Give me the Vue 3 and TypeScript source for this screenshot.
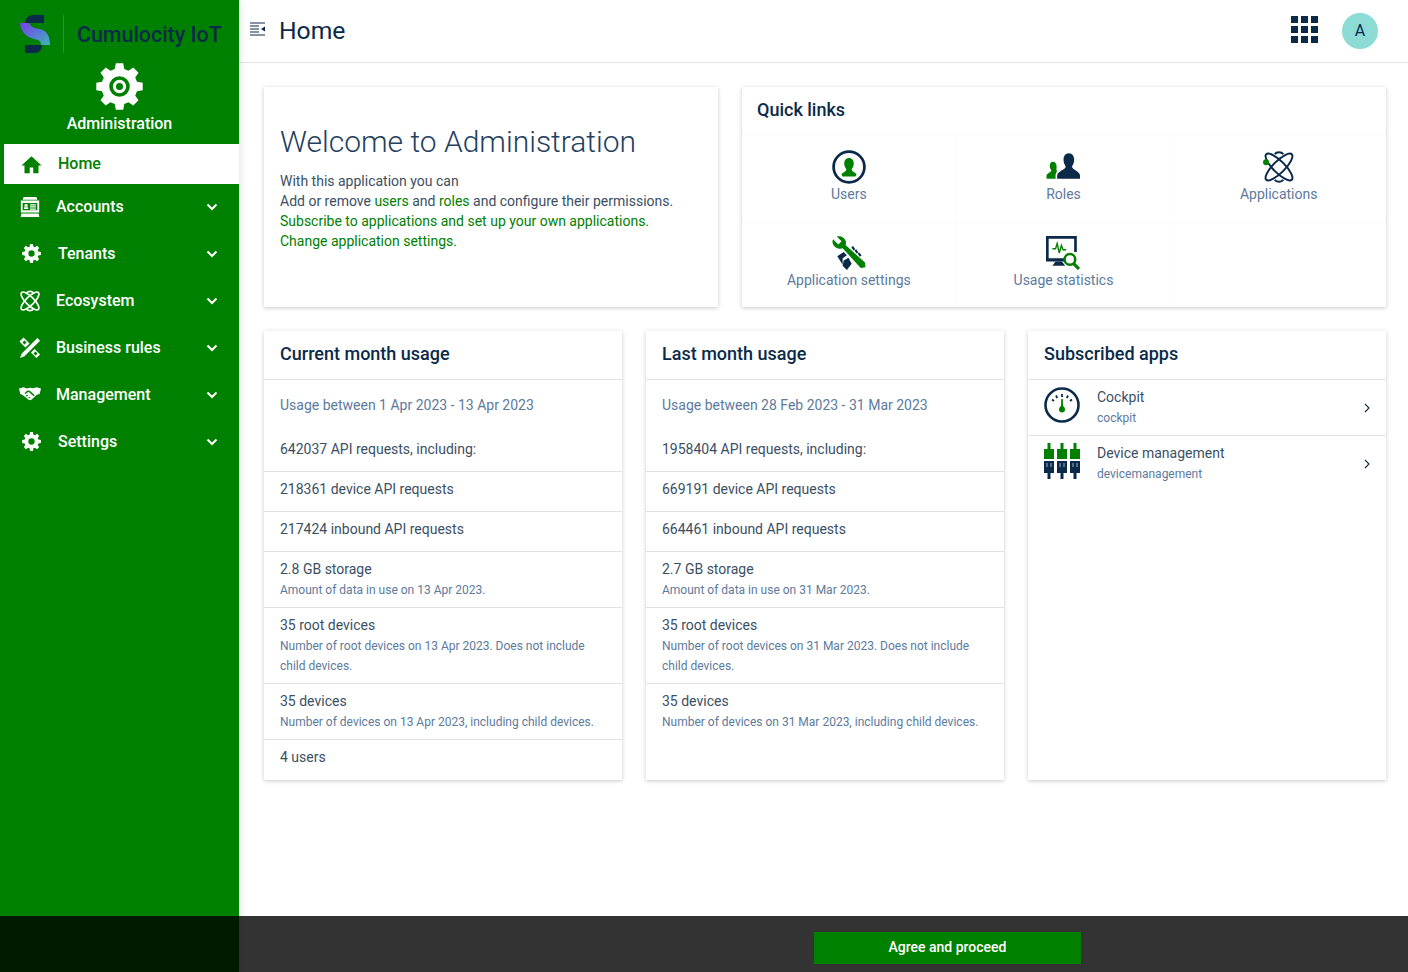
<script setup lang="ts">
interface NavItem {
  label: string;
  icon: string;
  wide?: boolean;
}

interface UsageRow {
  text: string;
  note?: string;
}

interface UsageCard {
  title: string;
  period: string;
  requests: string;
  rows: UsageRow[];
}

// builds a cog outline, extra radii become concentric holes/rings through evenodd
function gear(size: number, outer: number, inner: number, teeth: number, rings: number[]): string {
  const c = size / 2;
  const step = (Math.PI * 2) / teeth;
  const pts: string[] = [];
  for (let i = 0; i < teeth; i++) {
    const a = i * step - Math.PI / 2;
    const corners: [number, number][] = [
      [inner, a - step * 0.34],
      [outer, a - step * 0.2],
      [outer, a + step * 0.2],
      [inner, a + step * 0.34],
    ];
    for (const [r, t] of corners) {
      pts.push(`${(c + r * Math.cos(t)).toFixed(2)} ${(c + r * Math.sin(t)).toFixed(2)}`);
    }
  }
  const body = `M${pts.join("L")}Z`;
  const holes = rings
    .map((r) => `M${c - r} ${c}a${r} ${r} 0 1 0 ${r * 2} 0a${r} ${r} 0 1 0 ${-r * 2} 0Z`)
    .join("");
  return body + holes;
}

const adminGear = gear(48, 24, 18.5, 8, [10.5, 6.8, 3.6]);

const iconPaths: Record<string, string> = {
  accounts:
    "M5 1h14l1 3H4zM2 5h20v13H2zM4 7.5v8h16v-8zM6 9h3.4v2.6H6zM5.4 12.4h4.6v1.8H5.4zM12 9h6.4v1.3H12zM12 11.3h6.4v1.3H12zM12 13.6h6.4v1.3H12zM2.6 19h18.8l.8 4H1.8z",
  tenants: gear(24, 12, 9, 8, [4]),
  business:
    "M20 1l3 3L6 21l-5 2 2-5zM5 .5L.5 5 7 11.500 11.500 7zM6 3.800L3.800 6 6 8.200 8.200 6zM17 13L13 17l6 6 4-4zM18 15.800L15.800 18 18 20.200 20.200 18z",
  management:
    "M0 5l5-1.5 3.5 1.5L12 4l4 .5L19 3.5 24 5l-1.5 6-3 .8-6 5.4c-1 .8-2 .6-3 0L4 12 1.4 11zM9 7l-3 3 1 1 3.4-2.6 5.6 5 1.2-1.2L11.8 7.4zM7.4 12.8l1 1 1.6-1.4-1-.9zM10 15l1 .9 1.3-1.2-1-.9z",
};

const navItems: NavItem[] = [
  { label: "Accounts", icon: "accounts" },
  { label: "Tenants", icon: "tenants", wide: true },
  { label: "Ecosystem", icon: "atom" },
  { label: "Business rules", icon: "business" },
  { label: "Management", icon: "management" },
  { label: "Settings", icon: "tenants", wide: true },
];

const usageCards: UsageCard[] = [
  {
    title: "Current month usage",
    period: "Usage between 1 Apr 2023 - 13 Apr 2023",
    requests: "642037 API requests, including:",
    rows: [
      { text: "218361 device API requests" },
      { text: "217424 inbound API requests" },
      { text: "2.8 GB storage", note: "Amount of data in use on 13 Apr 2023." },
      {
        text: "35 root devices",
        note: "Number of root devices on 13 Apr 2023. Does not include child devices.",
      },
      { text: "35 devices", note: "Number of devices on 13 Apr 2023, including child devices." },
      { text: "4 users" },
    ],
  },
  {
    title: "Last month usage",
    period: "Usage between 28 Feb 2023 - 31 Mar 2023",
    requests: "1958404 API requests, including:",
    rows: [
      { text: "669191 device API requests" },
      { text: "664461 inbound API requests" },
      { text: "2.7 GB storage", note: "Amount of data in use on 31 Mar 2023." },
      {
        text: "35 root devices",
        note: "Number of root devices on 31 Mar 2023. Does not include child devices.",
      },
      { text: "35 devices", note: "Number of devices on 31 Mar 2023, including child devices." },
    ],
  },
];
</script>

<template>
  <div class="layout">
    <aside class="sidebar">
      <div class="brand">
        <svg class="brand__logo" viewBox="0 0 30 38" width="30" height="38">
          <defs>
            <linearGradient id="logo-s" x1="0" y1="0" x2="1" y2="1">
              <stop offset="0" stop-color="#7b3fe4" />
              <stop offset="0.5" stop-color="#5a78d8" />
              <stop offset="1" stop-color="#3fb4b8" />
            </linearGradient>
          </defs>
          <path d="M5 8C5 3 9 0 13 0H24V8Z" fill="#0b2a4a" />
          <path d="M0 8H9C11 12 14 13 19 14C26 15 30 20 30 30H21C21 26 19 25 14 24C6 22 1 17 0 8Z" fill="url(#logo-s)" />
          <path d="M5 30H22C22 35 19 38 14 38H5Z" fill="#0b2a4a" />
        </svg>
        <span class="brand__divider"></span>
        <span class="brand__name">Cumulocity IoT</span>
      </div>

      <div class="app-title">
        <svg viewBox="0 0 48 48" width="47" height="47">
          <path :d="adminGear" fill="#fff" fill-rule="evenodd" />
        </svg>
        <span>Administration</span>
      </div>

      <nav class="nav">
        <a class="nav__home">
          <svg viewBox="0 0 24 24" width="21" height="21">
            <path d="M12 2.500L0.500 13H4V22H10V15.500H14V22H20V13H23.500Z" fill="#008000" />
          </svg>
          <span>Home</span>
        </a>
        <a v-for="item in navItems" :key="item.label" class="nav__item" :class="{ 'nav__item--wide': item.wide }">
          <svg class="nav__icon" viewBox="0 0 24 24">
            <g v-if="item.icon === 'atom'" fill="none" stroke="#fff" stroke-width="1.800">
              <ellipse cx="12" cy="12" rx="13" ry="4.500" transform="rotate(45 12 12)" />
              <ellipse cx="12" cy="12" rx="13" ry="4.500" transform="rotate(-45 12 12)" />
              <path d="M8.500 3C10 1 14 1 15.500 3M8.500 21C10 23 14 23 15.500 21" />
            </g>
            <path v-else :d="iconPaths[item.icon]" fill="#fff" fill-rule="evenodd" />
          </svg>
          <span class="nav__label">{{ item.label }}</span>
          <svg class="nav__chevron" viewBox="0 0 12 8" width="12" height="8">
            <path d="M1.500 1.500L6 6L10.500 1.500" fill="none" stroke="#fff" stroke-width="2" />
          </svg>
        </a>
      </nav>
    </aside>

    <div class="main">
      <header class="topbar">
        <svg class="topbar__toggle" viewBox="0 0 15 14" width="15" height="14">
          <path d="M0 1h15M0 4h9M0 7h9M0 10h9M0 13h15" stroke="#0b2a4a" stroke-width="1" fill="none" />
          <path d="M15 4.500V9.500L11 7Z" fill="#0b2a4a" />
        </svg>
        <h1 class="topbar__title">Home</h1>
        <div class="topbar__grid">
          <i v-for="n in 9" :key="n"></i>
        </div>
        <div class="topbar__avatar">A</div>
      </header>

      <main class="content">
        <div class="row row--top">
          <section class="card welcome">
            <h2 class="welcome__title">Welcome to Administration</h2>
            <p>With this application you can</p>
            <p>Add or remove <a>users</a> and <a>roles</a> and configure their permissions.</p>
            <p><a>Subscribe to applications and set up your own applications.</a></p>
            <p><a>Change application settings.</a></p>
          </section>

          <section class="card quick">
            <h3 class="quick__title">Quick links</h3>
            <div class="quick__grid">
              <a class="quick__cell">
                <svg viewBox="0 0 32 32" width="34" height="34">
                  <circle cx="16" cy="16" r="14.500" fill="none" stroke="#0b2a4a" stroke-width="2.600" />
                  <path d="M16 7.500C13 7.500 11.500 10 11.500 13C11.500 15.500 12.800 17 13.500 18C13.500 20 11 20.500 9 22.500C9 24 10 25 11 25H21C22 25 23 24 23 22.500C21 20.500 18.500 20 18.500 18C19.200 17 20.500 15.500 20.500 13C20.500 10 19 7.500 16 7.500Z" fill="#008000" />
                </svg>
                <span>Users</span>
              </a>
              <a class="quick__cell">
                <svg viewBox="0 0 32 32" width="34" height="34">
                  <path d="M6.500 11C4.500 11 3.500 13 3.500 15C3.500 17 4.500 18 5 19C5 21 0.500 22 0.500 24V27H9V23.500C9 21.500 11 20.800 10 19C9.500 18 10 17 10 15C10 13 8.500 11 6.500 11Z" fill="#008000" />
                  <path d="M21.500 3C18 3 16.500 6 16.500 9C16.500 12 17.500 14 18.500 15.500C18.500 18.500 10.500 20 10.500 24V27H32V24C32 20 24.500 18.500 24.500 15.500C25.500 14 26.500 12 26.500 9C26.500 6 25 3 21.500 3Z" fill="#0b2a4a" />
                </svg>
                <span>Roles</span>
              </a>
              <a class="quick__cell">
                <svg viewBox="0 0 32 32" width="34" height="34">
                  <g fill="none" stroke="#0b2a4a" stroke-width="1.900">
                    <ellipse cx="16" cy="16" rx="17" ry="5.500" transform="rotate(45 16 16)" />
                    <ellipse cx="16" cy="16" rx="17" ry="5.500" transform="rotate(-45 16 16)" />
                    <path d="M12 4C13.500 1.500 18.500 1.500 20 4M12 28C13.500 30.500 18.500 30.500 20 28" />
                  </g>
                  <circle cx="3.800" cy="11.500" r="2.800" fill="#008000" />
                </svg>
                <span>Applications</span>
              </a>
              <a class="quick__cell">
                <svg viewBox="0 0 32 32" width="34" height="34">
                  <path d="M1 3L6 8L9 5L4.500 0.500C8 -0.500 12 1.500 13 5C13.300 6.300 13.200 7.500 12.800 8.500L31 25L31.500 29.500L27 30L10 11.500C6 13 1 10 0.500 6C0.400 5 0.500 4 1 3Z" fill="#008000" />
                  <path d="M5 19L11 15L14 18L10 21L10 27Z" fill="#0b2a4a" />
                  <path d="M11 23L15.500 20.500L18.500 26L14 32L10 28Z" fill="#0b2a4a" />
                  <path d="M19 10L21 13M22 13L24 16M25 16L27 19" stroke="#0b2a4a" stroke-width="2" />
                </svg>
                <span>Application settings</span>
              </a>
              <a class="quick__cell">
                <svg viewBox="0 0 32 32" width="34" height="34">
                  <path d="M0 0H29V15H26.500V2.500H2.500V21H19V24H0Z" fill="#0b2a4a" />
                  <path d="M9 24H15L18 28H6Z" fill="#0b2a4a" />
                  <path d="M6 12H9L10.500 7L12.500 16L14.500 9L16 13H19" fill="none" stroke="#008000" stroke-width="1.300" />
                  <circle cx="22.500" cy="22" r="5" fill="#fff" stroke="#008000" stroke-width="2.400" />
                  <path d="M26 26L31 31" stroke="#008000" stroke-width="3" />
                </svg>
                <span>Usage statistics</span>
              </a>
              <div class="quick__cell"></div>
            </div>
          </section>
        </div>

        <div class="row row--bottom">
          <section v-for="card in usageCards" :key="card.title" class="card usage">
            <h3 class="card__title">{{ card.title }}</h3>
            <div class="usage__intro">
              <p class="usage__period">{{ card.period }}</p>
              <p>{{ card.requests }}</p>
            </div>
            <div v-for="row in card.rows" :key="row.text" class="usage__row" :class="{ 'usage__row--plain': !row.note }">
              <p>{{ row.text }}</p>
              <small v-if="row.note">{{ row.note }}</small>
            </div>
          </section>

          <section class="card usage">
            <h3 class="card__title">Subscribed apps</h3>
            <a class="app-row">
              <svg class="app-row__icon" viewBox="0 0 36 36" width="36" height="36">
                <circle cx="18" cy="18" r="16.500" fill="none" stroke="#0b2a4a" stroke-width="2.600" />
                <path d="M18 7V10M12 8.500L13.200 11M24 8.500L22.800 11M8 12.500L10 14M28 12.500L26 14" stroke="#0b2a4a" stroke-width="1.800" />
                <path d="M17.200 12H18.800L19 19C20.500 20 21 21.500 21 22.500C21 24.200 19.700 25.500 18 25.500C16.300 25.500 15 24.200 15 22.500C15 21.500 15.500 20 17 19Z" fill="#008000" />
              </svg>
              <div class="app-row__text">
                <span>Cockpit</span>
                <small>cockpit</small>
              </div>
              <svg class="app-row__chevron" viewBox="0 0 6 10" width="6" height="10">
                <path d="M1 1L5 5L1 9" fill="none" stroke="#0b2a4a" stroke-width="1.100" />
              </svg>
            </a>
            <a class="app-row">
              <svg class="app-row__icon" viewBox="0 0 36 36" width="36" height="36">
                <g v-for="x in [0, 13, 26]" :key="x" :transform="`translate(${x} 0)`">
                  <path d="M3.500 0H6.500V6H10V16H0V6H3.500Z" fill="#008000" />
                  <path d="M0 18H10V30H6.500V37H3.500V30H0Z" fill="#0b2a4a" />
                  <path d="M3 20V24M7 20V24" stroke="#9fb0c2" stroke-width="1" />
                </g>
              </svg>
              <div class="app-row__text">
                <span>Device management</span>
                <small>devicemanagement</small>
              </div>
              <svg class="app-row__chevron" viewBox="0 0 6 10" width="6" height="10">
                <path d="M1 1L5 5L1 9" fill="none" stroke="#0b2a4a" stroke-width="1.100" />
              </svg>
            </a>
          </section>
        </div>
      </main>
    </div>

    <div class="consent">
      <button class="consent__btn" type="button">Agree and proceed</button>
    </div>
  </div>
</template>

<style>
html,
body {
  margin: 0;
  height: 100%;
  overflow: hidden;
}
</style>

<style scoped>
.layout {
  position: relative;
  display: flex;
  height: 972px;
  font-family: Roboto, "Liberation Sans", sans-serif;
  font-size: 14px;
  line-height: 20px;
  color: #3b4f63;
  background: #fff;
  overflow: hidden;
}

p,
h1,
h2,
h3 {
  margin: 0;
}

.sidebar {
  flex: 0 0 239px;
  background: #008000;
  box-shadow: 0 0 8px rgba(0, 0, 0, 0.16);
  z-index: 1;
}

.brand {
  display: flex;
  align-items: center;
  height: 38px;
  padding: 15px 0 0 20px;
}

.brand__divider {
  width: 1px;
  height: 38px;
  margin: 0 13px;
  background: #4d7a5c;
}

.brand__name {
  padding-top: 2px;
  font-size: 21.4px;
  font-weight: 500;
  color: #0b2a4a;
  white-space: nowrap;
}

.app-title {
  display: flex;
  flex-direction: column;
  align-items: center;
  margin-top: 10px;
  color: #fff;
  font-size: 16px;
  font-weight: 500;
}

.app-title span {
  margin-top: 4px;
}

.nav {
  margin-top: 10px;
}

.nav a {
  display: flex;
  align-items: center;
  font-size: 16px;
  font-weight: 500;
}

.nav__home {
  height: 40px;
  margin-left: 4px;
  padding-left: 17px;
  gap: 16px;
  background: #fff;
  color: #008000;
}

.nav__item {
  height: 45px;
  padding: 0 21px 2px 19px;
  color: #fff;
}

.nav__icon {
  width: 22px;
  height: 22px;
  margin-right: 15px;
}

.nav__item--wide {
  padding-left: 22px;
}

.nav__item--wide .nav__icon {
  width: 19px;
  height: 19px;
  margin-right: 17px;
}

.nav__label {
  flex: 1;
}

.main {
  flex: 1;
  min-width: 0;
  display: flex;
  flex-direction: column;
}

.topbar {
  display: flex;
  align-items: center;
  height: 62px;
  padding: 0 30px 0 11px;
  border-bottom: 1px solid #e2e4ea;
}

.topbar__toggle {
  margin: -4px 14px 0 0;
}

.topbar__title {
  flex: 1;
  font-size: 24.7px;
  font-weight: 400;
  line-height: 30px;
  color: #0b2a4a;
}

.topbar__grid {
  display: grid;
  grid-template-columns: repeat(3, 7px);
  gap: 3px;
  margin: -4px 24px 0 0;
}

.topbar__grid i {
  height: 7px;
  background: #0b2a4a;
}

.topbar__avatar {
  width: 36px;
  height: 36px;
  border-radius: 50%;
  background: #8cdbd5;
  color: #0b2a4a;
  font-size: 16px;
  line-height: 36px;
  text-align: center;
}

.content {
  padding: 24px 22px 0 25px;
}

.row {
  display: grid;
  gap: 24px;
}

.row--top {
  grid-template-columns: 454px 1fr;
  height: 220px;
}

.row--bottom {
  grid-template-columns: repeat(3, 1fr);
  height: 449px;
  margin-top: 24px;
}

.card {
  background: #fff;
  box-shadow: 0 1px 4px rgba(0, 0, 0, 0.22);
}

.welcome {
  padding: 36px 16px 0;
}

.welcome a {
  color: #008000;
}

.welcome__title {
  margin-bottom: 10px;
  font-size: 30px;
  font-weight: 300;
  line-height: 38px;
  color: #23405f;
}

.quick__title {
  padding: 12px 16px 0 15px;
  font-size: 18px;
  font-weight: 500;
  line-height: 21px;
  color: #0b2a4a;
}

.quick__grid {
  display: grid;
  grid-template-columns: repeat(3, 1fr);
  grid-template-rows: 86px 86px;
  margin-top: 15px;
}

.quick__cell {
  display: flex;
  flex-direction: column;
  align-items: center;
  padding-top: 14px;
  border-top: 1px solid #fbfbfb;
  border-right: 1px solid #fbfbfb;
  color: #5c7a9c;
}

.quick__cell:nth-child(3n) {
  border-right: 0;
}

.card__title {
  padding: 12px 16px 15px;
  border-bottom: 1px solid #e2e2e2;
  font-size: 18px;
  font-weight: 500;
  line-height: 21px;
  color: #0b2a4a;
}

.usage__intro {
  padding: 15px 16px 12px;
}

.usage__period {
  margin-bottom: 24px;
  color: #5c7a9c;
}

.usage__row {
  padding: 7px 16px 7px;
  border-top: 1px solid #e2e2e2;
}

.usage__row--plain {
  padding-bottom: 12px;
}

.usage__row small {
  display: block;
  margin-top: 1px;
  font-size: 12px;
  color: #5c7a9c;
}

.app-row small {
  display: block;
  font-size: 12px;
  color: #5c7a9c;
}

.app-row {
  display: flex;
  align-items: center;
  height: 55px;
  padding: 0 16px;
  border-bottom: 1px solid #e2e2e2;
}

.app-row:last-child {
  border-bottom: 0;
}

.app-row__icon {
  margin-top: -6px;
}

.app-row__text {
  flex: 1;
  display: flex;
  flex-direction: column;
  margin: 0 0 1px 17px;
}

.app-row__text small {
  margin-top: 1px;
}

.consent {
  position: absolute;
  left: 0;
  right: 0;
  bottom: 0;
  z-index: 2;
  display: flex;
  justify-content: center;
  height: 56px;
  padding: 16px 0 0 487px;
  box-sizing: border-box;
  background: rgba(0, 0, 0, 0.8);
}

.consent__btn {
  width: 267px;
  height: 32px;
  padding: 0 0 2px;
  border: 0;
  background: #008000;
  color: #fff;
  font-family: inherit;
  font-size: 14px;
  font-weight: 500;
}
</style>
